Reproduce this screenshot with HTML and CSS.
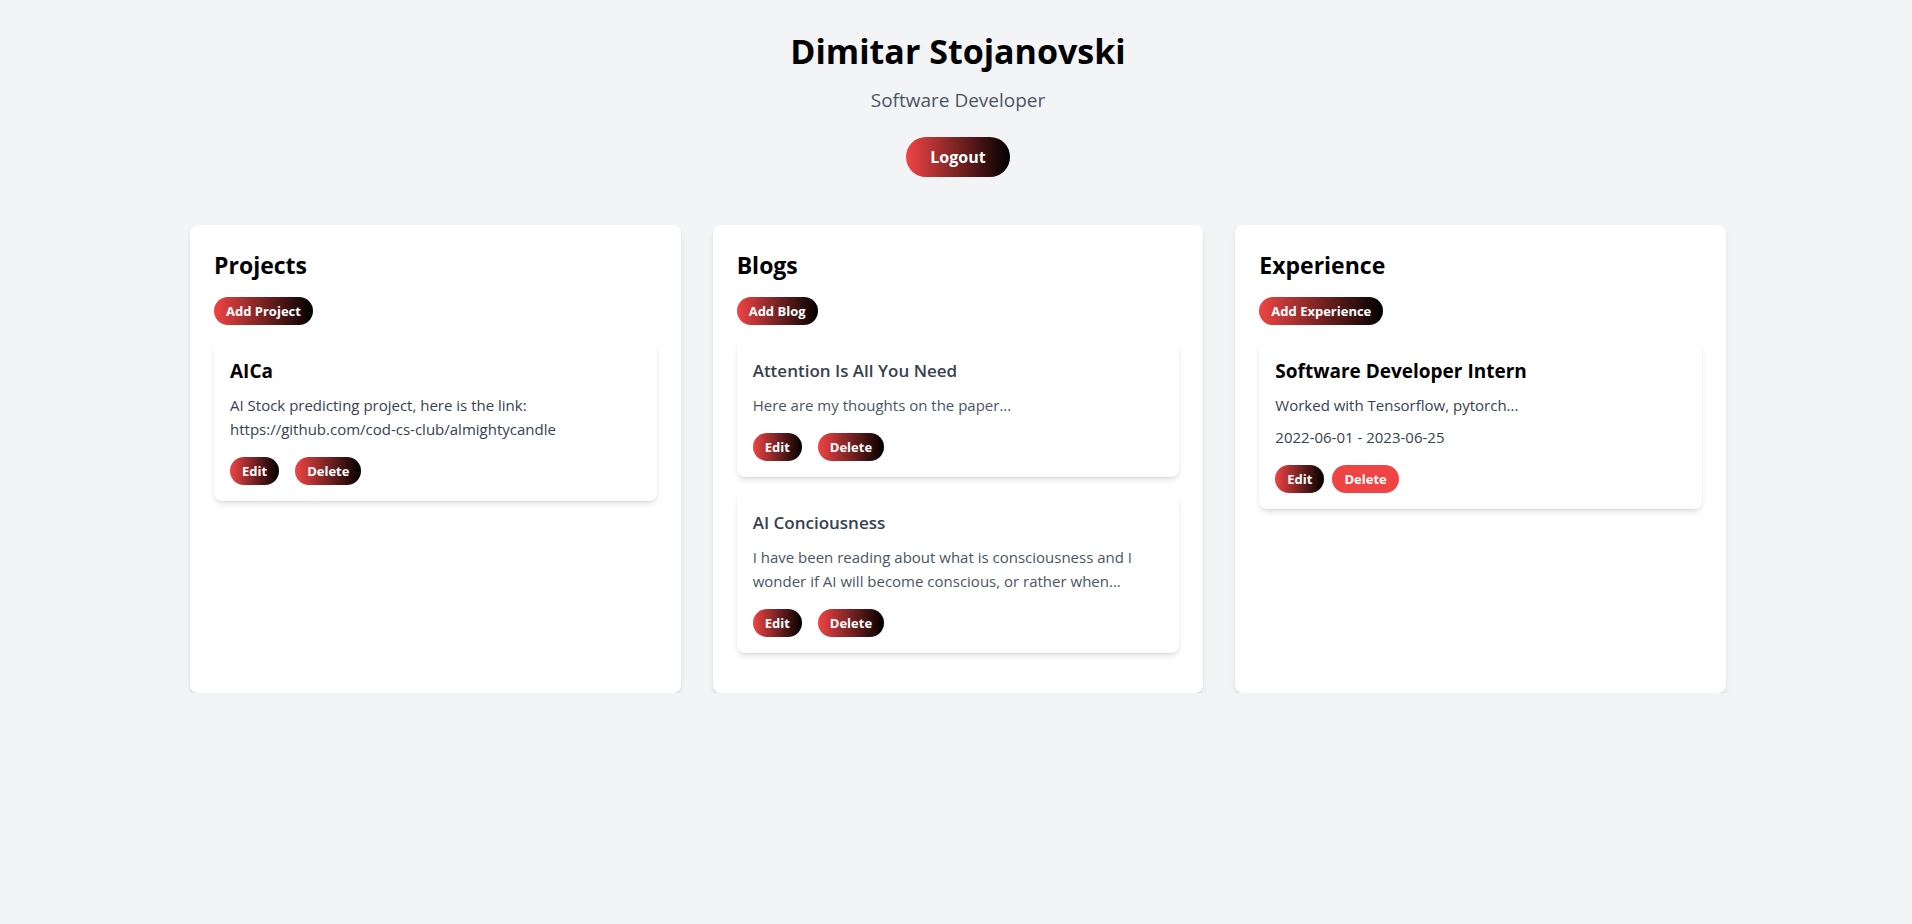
FILE: index.html
```html
<!DOCTYPE html>
<html lang="en">
<head>
<meta charset="utf-8">
<title>Dimitar Stojanovski</title>
<link rel="stylesheet" href="styles.css">
</head>
<body>
<div class="page">
  <header class="header">
    <h1 class="name">Dimitar Stojanovski</h1>
    <p class="role">Software Developer</p>
    <button class="btn btn-logout">Logout</button>
  </header>

  <main class="grid">
    <section class="panel">
      <h2 class="panel-title">Projects</h2>
      <div class="add-row"><button class="btn btn-sm">Add Project</button></div>
      <div class="item">
        <h3 class="item-title">AICa</h3>
        <p class="item-text">AI Stock predicting project, here is the link: https://github.com/cod-cs-club/almightycandle</p>
        <div class="actions">
          <button class="btn btn-sm">Edit</button>
          <button class="btn btn-sm">Delete</button>
        </div>
      </div>
    </section>

    <section class="panel">
      <h2 class="panel-title">Blogs</h2>
      <div class="add-row"><button class="btn btn-sm">Add Blog</button></div>
      <div class="item">
        <h3 class="blog-title">Attention Is All You Need</h3>
        <p class="blog-text">Here are my thoughts on the paper...</p>
        <div class="actions">
          <button class="btn btn-sm">Edit</button>
          <button class="btn btn-sm">Delete</button>
        </div>
      </div>
      <div class="item">
        <h3 class="blog-title">AI Conciousness</h3>
        <p class="blog-text">I have been reading about what is consciousness and I wonder if AI will become conscious, or rather when...</p>
        <div class="actions">
          <button class="btn btn-sm">Edit</button>
          <button class="btn btn-sm">Delete</button>
        </div>
      </div>
    </section>

    <section class="panel">
      <h2 class="panel-title">Experience</h2>
      <div class="add-row"><button class="btn btn-sm">Add Experience</button></div>
      <div class="item">
        <h3 class="item-title">Software Developer Intern</h3>
        <p class="item-text exp-desc">Worked with Tensorflow, pytorch...</p>
        <p class="item-text exp-date">2022-06-01 - 2023-06-25</p>
        <div class="actions actions-tight">
          <button class="btn btn-sm">Edit</button>
          <button class="btn btn-sm btn-solid">Delete</button>
        </div>
      </div>
    </section>
  </main>
</div>
</body>
</html>
```

FILE: styles.css
```css
* { box-sizing: border-box; }

html, body {
  margin: 0;
  padding: 0;
}

body {
  background: #f3f4f6;
  font-family: "Open Sans", "Noto Sans", sans-serif;
  color: #000;
}

.page {
  padding: 31px 0 0 4px;
}

.header {
  display: flex;
  flex-direction: column;
  align-items: center;
}

.name {
  margin: 0;
  font-size: 34px;
  line-height: 40px;
  font-weight: 700;
  color: #000;
}

.role {
  margin: 15px 0 0;
  font-size: 19px;
  line-height: 28px;
  color: #4b5563;
}

.btn {
  border: 0;
  font-family: inherit;
  color: #fff;
  font-weight: 700;
  border-radius: 9999px;
  background: linear-gradient(to right, #ef4444, #000);
  cursor: pointer;
}

.btn-logout {
  margin-top: 23px;
  padding: 8px 24px;
  font-size: 16px;
  line-height: 24px;
}

.btn-sm {
  padding: 4px 12px;
  font-size: 13px;
  line-height: 20px;
}

.btn-solid {
  background: #ef4444;
}

.grid {
  width: 1536px;
  margin: 48px auto 0;
  display: grid;
  grid-template-columns: repeat(3, 1fr);
  gap: 32px;
  align-items: stretch;
}

.panel {
  background: #fff;
  border-radius: 8px;
  padding: 24px;
  box-shadow: 0 4px 6px -1px rgba(0,0,0,0.1), 0 2px 4px -2px rgba(0,0,0,0.1);
}

.panel-title {
  margin: 0 0 16px;
  font-size: 23px;
  line-height: 32px;
  font-weight: 700;
}

.add-row {
  display: flex;
  margin-bottom: 16px;
}

.item {
  background: #fff;
  border-radius: 8px;
  padding: 16px;
  margin-bottom: 16px;
  box-shadow: 0 4px 6px -1px rgba(0,0,0,0.1), 0 2px 4px -2px rgba(0,0,0,0.1);
}

.item-title {
  margin: 0 0 8px;
  font-size: 19px;
  line-height: 28px;
  font-weight: 700;
  color: #000;
}

.item-text {
  margin: 0 0 16px;
  font-size: 15px;
  line-height: 24px;
  color: #374151;
}

.exp-desc {
  margin-bottom: 8px;
}

.blog-title {
  margin: 0 0 8px;
  font-size: 17px;
  line-height: 28px;
  font-weight: 600;
  color: #374151;
}

.blog-text {
  margin: 0 0 16px;
  font-size: 15px;
  line-height: 24px;
  color: #4b5563;
}

.actions {
  display: flex;
  gap: 16px;
}

.actions-tight {
  gap: 8px;
}
```
